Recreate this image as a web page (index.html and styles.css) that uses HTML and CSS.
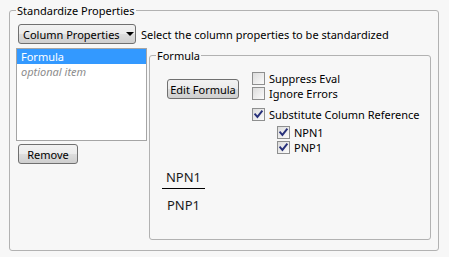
FILE: index.html
```html
<!DOCTYPE html>
<html>
<head>
<meta charset="utf-8">
<link rel="stylesheet" href="styles.css">
</head>
<body>
<fieldset class="outer">
  <legend class="legend">Standardize Properties</legend>
  <div class="top-row">
    <button class="btn dropdown">Column Properties<span class="arrow"></span></button>
    <span class="hint">Select the column properties to be standardized</span>
  </div>
  <div class="main">
    <div class="left">
      <div class="list">
        <div class="item sel">Formula</div>
        <div class="item opt">optional item</div>
      </div>
      <button class="btn remove">Remove</button>
    </div>
    <fieldset class="inner">
      <legend class="legend">Formula</legend>
      <div class="inner-row">
        <button class="btn edit">Edit Formula</button>
        <div class="checks">
          <label class="check"><span class="box"></span>Suppress Eval</label>
          <label class="check"><span class="box"></span>Ignore Errors</label>
          <label class="check gap"><span class="box on"><svg viewBox="0 0 13 13" width="13" height="13"><path d="M3.2 6.4 L5.4 8.9 L9.8 3.3" fill="none" stroke="#27307a" stroke-width="1.9" stroke-linecap="square"/></svg></span>Substitute Column Reference</label>
          <div class="sub">
            <label class="check"><span class="box on"><svg viewBox="0 0 13 13" width="13" height="13"><path d="M3.2 6.4 L5.4 8.9 L9.8 3.3" fill="none" stroke="#27307a" stroke-width="1.9" stroke-linecap="square"/></svg></span>NPN1</label>
            <label class="check"><span class="box on"><svg viewBox="0 0 13 13" width="13" height="13"><path d="M3.2 6.4 L5.4 8.9 L9.8 3.3" fill="none" stroke="#27307a" stroke-width="1.9" stroke-linecap="square"/></svg></span>PNP1</label>
          </div>
        </div>
      </div>
      <div class="frac">
        <div class="num">NPN1</div>
        <div class="den">PNP1</div>
      </div>
    </fieldset>
  </div>
</fieldset>
</body>
</html>
```
FILE: styles.css
```css
html, body {
  margin: 0;
  padding: 0;
  background: #f7f7f7;
}
body {
  font-family: "Noto Sans", "Open Sans", sans-serif;
  font-size: 11px;
  color: #000;
  width: 449px;
  height: 257px;
  overflow: hidden;
  white-space: nowrap;
}
.outer {
  margin: 2px 0 0 9px;
  width: 430px;
  box-sizing: border-box;
  height: 249px;
  border: 1px solid #b2b2b2;
  border-radius: 3px;
  padding: 5px 7px 0 6px;
}
.legend {
  padding: 0 1px;
  margin-left: 0;
  line-height: 17px;
  height: 17px;
}
.top-row {
  display: flex;
  align-items: center;
  height: 20px;
}
.btn {
  font-family: inherit;
  font-size: 11px;
  color: #000;
  height: 20px;
  border: 1px solid #707070;
  border-radius: 3px;
  background: linear-gradient(#f2f2f2 0%, #ebebeb 50%, #dddddd 50%, #cfcfcf 100%);
  padding: 0;
  line-height: 17px;
  box-sizing: border-box;
  white-space: nowrap;
  flex-shrink: 0;
}
.dropdown {
  margin-left: 2px;
  width: 118px;
  display: flex;
  align-items: center;
  padding-left: 4px;
}
.arrow {
  display: inline-block;
  margin-left: 6px;
  width: 0;
  height: 0;
  border-left: 4px solid transparent;
  border-right: 4px solid transparent;
  border-top: 4px solid #000;
}
.hint {
  margin-left: 5px;
}
.main {
  display: flex;
  margin-top: 3px;
}
.left {
  width: 131px;
  margin-top: 1px;
  flex-shrink: 0;
}
.list {
  height: 93px;
  box-sizing: border-box;
  border: 1px solid #a5a5a5;
  background: #fff;
}
.item {
  height: 15px;
  line-height: 15px;
  padding-left: 4px;
}
.sel {
  background: #3399ff;
  color: #fff;
}
.opt {
  font-style: italic;
  color: #8c8c8c;
}
.remove {
  margin: 3px 0 0 2px;
  width: 60px;
}
.inner {
  margin: 0 0 0 2px;
  width: 282px;
  height: 193px;
  box-sizing: border-box;
  border: 1px solid #b2b2b2;
  border-radius: 3px;
  padding: 0 0 0 6px;
  min-width: 0;
  flex-shrink: 0;
}
.inner-row {
  display: flex;
  align-items: flex-start;
}
.edit {
  margin: 15px 0 0 11px;
  width: 72px;
}
.checks {
  margin: 7px 0 0 13px;
}
.check {
  display: flex;
  align-items: center;
  height: 15px;
}
.check.gap {
  margin-top: 6px;
}
.box {
  width: 13px;
  height: 13px;
  flex-shrink: 0;
  box-sizing: border-box;
  border: 1px solid #8e8f8f;
  background: linear-gradient(135deg, #dcdcdc, #fbfbfb);
  margin-right: 4px;
  position: relative;
}
.box svg {
  position: absolute;
  left: -1px;
  top: -1px;
}
.sub {
  margin: 3px 0 0 25px;
}
.frac {
  width: 43px;
  margin: 13px 0 0 6px;
  font-size: 13px;
  text-align: center;
  color: #1a1a1a;
}
.num {
  line-height: 18px;
  padding-bottom: 2px;
  border-bottom: 1px solid #000;
}
.den {
  line-height: 18px;
  padding-top: 7px;
}
```
